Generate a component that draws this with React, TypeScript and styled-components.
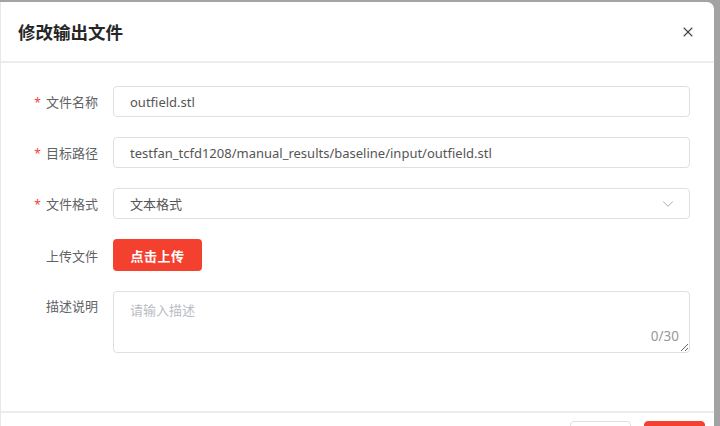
import * as React from 'react'
import styled, { createGlobalStyle } from 'styled-components'
import { X, ChevronDown } from 'lucide-react'

const GlobalStyle = createGlobalStyle`
  html, body {
    margin: 0;
    padding: 0;
    height: 100%;
    overflow: hidden;
    background: #a3a3a3;
  }
  body {
    font-family: "Noto Sans", "Noto Sans CJK SC", sans-serif;
  }
  * {
    box-sizing: border-box;
  }
`

const Backdrop = styled.div`
  height: 426px;
  padding: 2px 6px 0 0;
`

// the modal runs on below the window; only the top of its footer shows
const Dialog = styled.div`
  width: 714px;
  height: 424px;
  overflow: hidden;
  background: #fff;
  border-radius: 0 7px 0 0;
  border-left: 1px solid #e6e9ef;
  display: flex;
  flex-direction: column;
`

const Header = styled.div`
  flex-shrink: 0;
  height: 61px;
  display: flex;
  align-items: center;
  justify-content: space-between;
  padding: 0 18px 0 17px;
  border-bottom: 2px solid #ececec;
`

const Title = styled.h2`
  margin: 0;
  font-size: 17.5px;
  font-weight: 700;
  color: #262626;
`

const CloseButton = styled.button`
  border: none;
  background: none;
  padding: 0;
  display: flex;
  color: #444;
  cursor: pointer;
`

const Body = styled.div`
  flex-shrink: 0;
  height: 350px;
  padding: 23px 24px 0 0;
  display: flex;
  flex-direction: column;
  gap: 20px;
  border-bottom: 2px solid #ececec;
`

const Row = styled.div<{ $top?: boolean }>`
  display: flex;
  align-items: ${p => (p.$top ? 'flex-start' : 'center')};
`

const Label = styled.label<{ $top?: boolean }>`
  width: 112px;
  flex-shrink: 0;
  padding-right: 15px;
  padding-top: ${p => (p.$top ? '5px' : '0')};
  text-align: right;
  font-size: 13px;
  color: #606266;
`

const Required = styled.span`
  color: #f0443a;
  margin-right: 5px;
  font-size: 12px;
`

const Field = styled.div`
  flex: 1;
  height: 31px;
  border: 1px solid #dcdfe6;
  border-radius: 4px;
  display: flex;
  align-items: center;
  justify-content: space-between;
  padding: 0 16px;
  font-size: 13px;
  color: #555;
`

const Chevron = styled(ChevronDown)`
  color: #b5b9c2;
  margin-right: -4px;
`

const UploadButton = styled.button`
  height: 32px;
  width: 89px;
  border: none;
  border-radius: 4px;
  background: #f4402e;
  color: #fff;
  font-family: inherit;
  font-size: 13px;
  font-weight: 700;
  letter-spacing: 0.5px;
`

const AreaWrap = styled.div`
  flex: 1;
  position: relative;
  display: flex;
`

const TextArea = styled.textarea`
  flex: 1;
  height: 62px;
  border: 1px solid #dcdfe6;
  border-radius: 4px;
  padding: 8px 16px;
  font-family: inherit;
  font-size: 13px;
  color: #555;
  resize: vertical;
  outline: none;
  &::placeholder {
    color: #b9bcc3;
  }
`

const Counter = styled.span`
  position: absolute;
  right: 11px;
  bottom: 8px;
  font-size: 13.5px;
  color: #999;
`

const Footer = styled.div`
  flex-shrink: 0;
  display: flex;
  justify-content: flex-end;
  gap: 13px;
  padding: 8px 9px 0 0;
`

const FooterButton = styled.button<{ $primary?: boolean }>`
  width: 61px;
  height: 32px;
  border-radius: 4px;
  border: 1px solid ${p => (p.$primary ? '#f4402e' : '#dcdfe6')};
  background: ${p => (p.$primary ? '#f4402e' : '#fff')};
  color: ${p => (p.$primary ? '#fff' : '#555')};
  font-family: inherit;
  font-size: 13px;
`

export default function App() {
  return (
    <>
      <GlobalStyle />
      <Backdrop>
        <Dialog>
          <Header>
            <Title>修改输出文件</Title>
            <CloseButton aria-label="关闭">
              <X size={16} strokeWidth={1.6} />
            </CloseButton>
          </Header>
          <Body>
            <Row>
              <Label>
                <Required>*</Required>文件名称
              </Label>
              <Field>outfield.stl</Field>
            </Row>
            <Row>
              <Label>
                <Required>*</Required>目标路径
              </Label>
              <Field>testfan_tcfd1208/manual_results/baseline/input/outfield.stl</Field>
            </Row>
            <Row>
              <Label>
                <Required>*</Required>文件格式
              </Label>
              <Field>
                文本格式
                <Chevron size={18} strokeWidth={1.4} />
              </Field>
            </Row>
            <Row>
              <Label>上传文件</Label>
              <UploadButton>点击上传</UploadButton>
            </Row>
            <Row $top>
              <Label $top>描述说明</Label>
              <AreaWrap>
                <TextArea placeholder="请输入描述" />
                <Counter>0/30</Counter>
              </AreaWrap>
            </Row>
          </Body>
          <Footer>
            <FooterButton>取消</FooterButton>
            <FooterButton $primary>确定</FooterButton>
          </Footer>
        </Dialog>
      </Backdrop>
    </>
  )
}
